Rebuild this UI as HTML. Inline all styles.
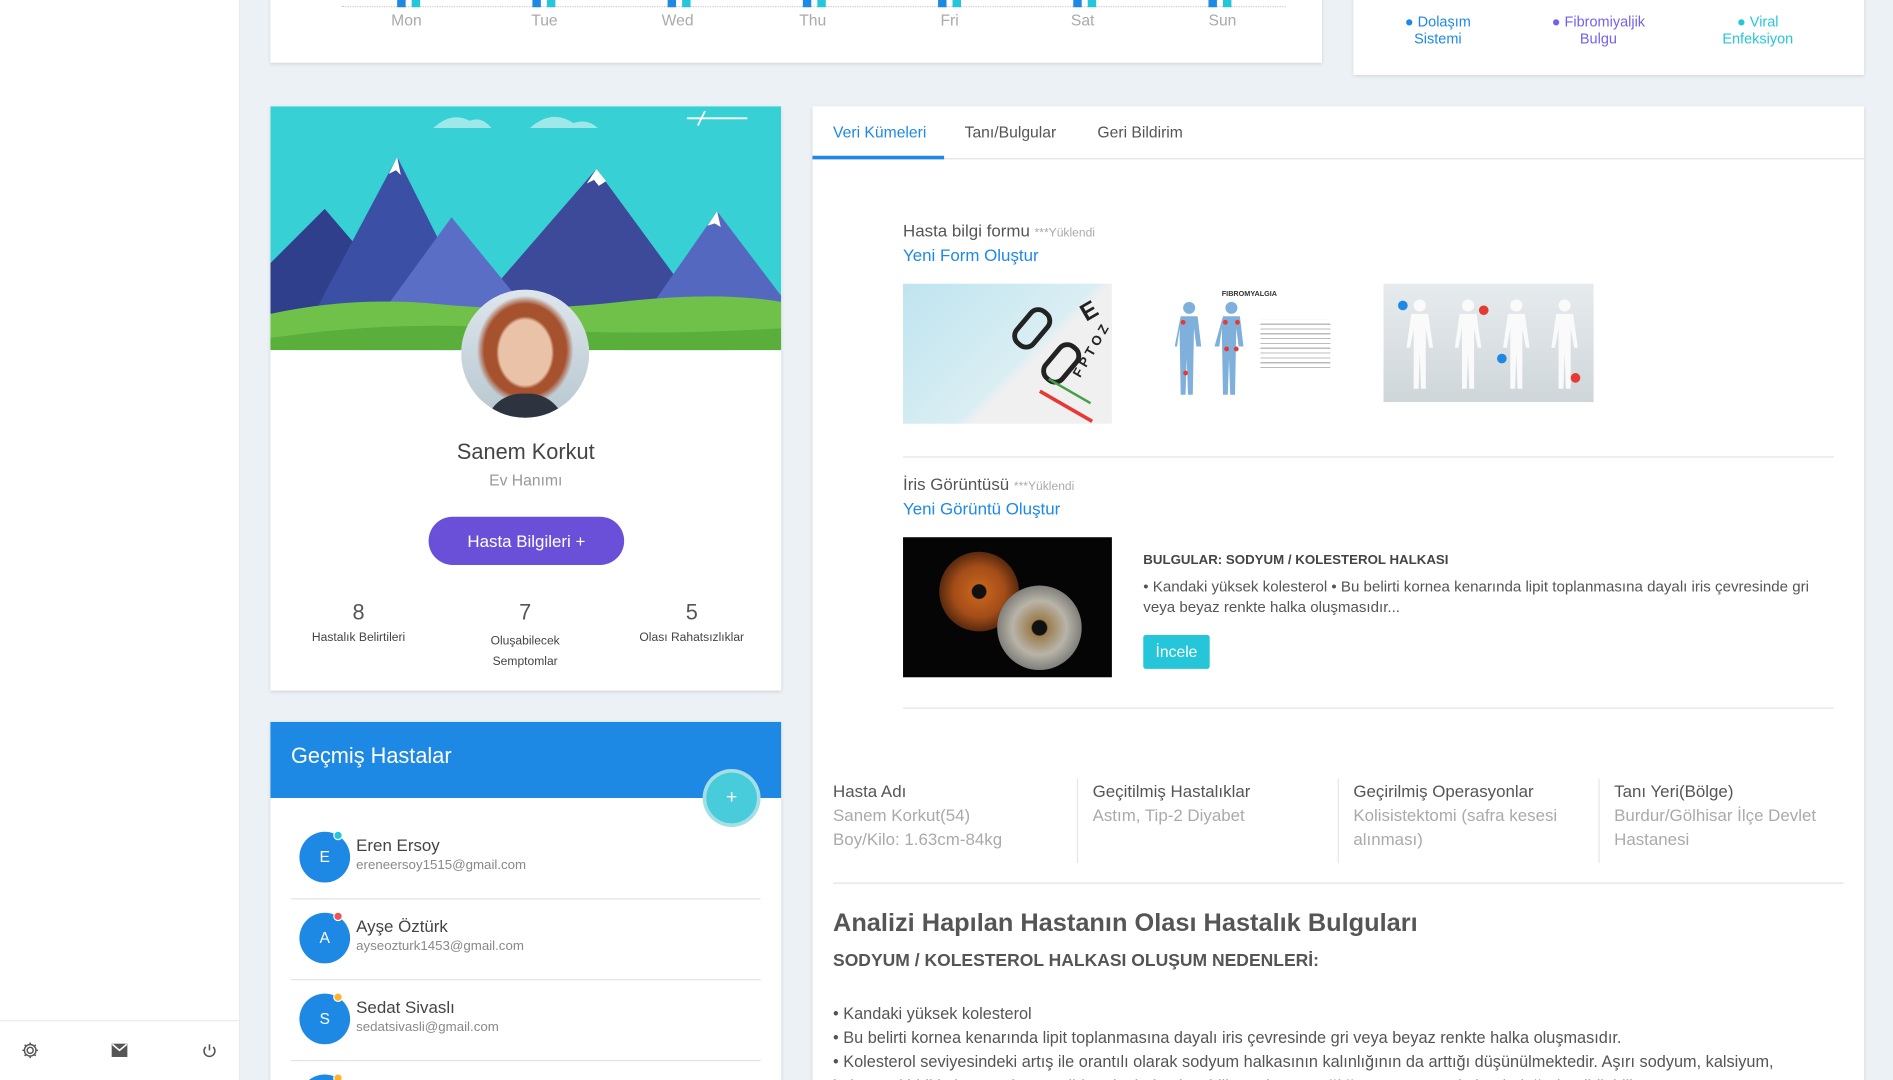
<!DOCTYPE html>
<html><head><meta charset="utf-8"><style>
*{margin:0;padding:0;box-sizing:border-box}
html,body{width:1893px;height:1080px;overflow:hidden;background:#ebf1f4}
#clip{position:relative;width:1893px;height:1080px;overflow:hidden}
#w{position:absolute;left:0;top:0;width:1568px;height:895px;transform:scale(1.20727);transform-origin:0 0;font-family:"Liberation Sans",sans-serif;color:#555}
.a{position:absolute}
.card{position:absolute;background:#fff;box-shadow:0 1px 3px rgba(0,0,0,.12)}
.t{position:absolute;white-space:nowrap}
.gray{color:#a9a9a9}
.blue{color:#1e88e5}
hr{position:absolute;border:0;border-top:1px solid #e3e3e3;height:0}
</style></head><body><div id="clip"><div id="w">
<div class="a" style="left:0;top:0;width:199px;height:895px;background:#fff;border-right:1px solid #e6ebee"></div>
<div class="a" style="left:0;top:845px;width:199px;height:50px;border-top:1px solid #e6ebee"></div>
<svg class="a" style="left:17px;top:862px" width="16" height="16" viewBox="0 0 16 16" fill="none" stroke="#555" stroke-width="1.2"><circle cx="8" cy="8" r="2.5"/><path d="M8 1.5v2M8 12.5v2M1.5 8h2M12.5 8h2M3.4 3.4l1.4 1.4M11.2 11.2l1.4 1.4M3.4 12.6l1.4-1.4M11.2 4.8l1.4-1.4"/><circle cx="8" cy="8" r="4.8"/></svg>
<svg class="a" style="left:92px;top:864px" width="14" height="12" viewBox="0 0 14 12"><rect x="0.5" y="0.5" width="13" height="11" fill="#555"/><path d="M1 1l6 5 6-5" stroke="#fff" stroke-width="1.3" fill="none"/></svg>
<svg class="a" style="left:167px;top:864px" width="13" height="13" viewBox="0 0 13 13" fill="none" stroke="#555" stroke-width="1.3"><path d="M6.5 1v5"/><path d="M3.5 3.2a4.5 4.5 0 1 0 6 0"/></svg>

<div class="card" style="left:224px;top:-10px;width:871px;height:62px"></div>
<div class="t gray" style="left:266px;top:-8px;font-size:10px">0</div>
<div class="a" style="left:283px;top:5px;width:782px;border-top:1px dotted #ccc"></div>
<div class="t" style="left:324px;top:9px;font-size:13px;color:#aaa;width:1000px">
<span class="a" style="left:0">Mon</span><span class="a" style="left:116px">Tue</span><span class="a" style="left:224px">Wed</span><span class="a" style="left:338px">Thu</span><span class="a" style="left:455px">Fri</span><span class="a" style="left:563px">Sat</span><span class="a" style="left:677px">Sun</span></div>
<div class="a" style="left:329px;top:0;width:7px;height:6px;background:#1e88e5"></div><div class="a" style="left:341px;top:0;width:7px;height:6px;background:#26c6da"></div>
<div class="a" style="left:441px;top:0;width:7px;height:6px;background:#1e88e5"></div><div class="a" style="left:453px;top:0;width:7px;height:6px;background:#26c6da"></div>
<div class="a" style="left:553px;top:0;width:7px;height:6px;background:#1e88e5"></div><div class="a" style="left:565px;top:0;width:7px;height:6px;background:#26c6da"></div>
<div class="a" style="left:665px;top:0;width:7px;height:6px;background:#1e88e5"></div><div class="a" style="left:677px;top:0;width:7px;height:6px;background:#26c6da"></div>
<div class="a" style="left:777px;top:0;width:7px;height:6px;background:#1e88e5"></div><div class="a" style="left:789px;top:0;width:7px;height:6px;background:#26c6da"></div>
<div class="a" style="left:889px;top:0;width:7px;height:6px;background:#1e88e5"></div><div class="a" style="left:901px;top:0;width:7px;height:6px;background:#26c6da"></div>
<div class="a" style="left:1001px;top:0;width:7px;height:6px;background:#1e88e5"></div><div class="a" style="left:1013px;top:0;width:7px;height:6px;background:#26c6da"></div>

<div class="card" style="left:1121px;top:-10px;width:423px;height:72px"></div>
<div class="t" style="left:1150px;top:11px;width:82px;text-align:center;font-size:12px;line-height:14px;color:#1e88e5">● Dolaşım<br>Sistemi</div>
<div class="t" style="left:1274px;top:11px;width:100px;text-align:center;font-size:12px;line-height:14px;color:#7460ee">● Fibromiyaljik<br>Bulgu</div>
<div class="t" style="left:1415px;top:11px;width:82px;text-align:center;font-size:12px;line-height:14px;color:#26c6da">● Viral<br>Enfeksiyon</div>

<div class="card" style="left:224px;top:88px;width:423px;height:484px"></div>
<svg class="a" style="left:224px;top:88px" width="423" height="202" viewBox="0 0 423 202">
<rect width="423" height="202" fill="#37d0d4"/>
<path d="M135 18q15-14 30-6q10-4 18 6z" fill="#9ee8ea"/><path d="M215 18q18-16 36-4q12-4 20 4z" fill="#9ee8ea"/>
<path d="M345 10h50M360 4l-6 12" stroke="#fff" stroke-width="1.5"/>
<path d="M0 200V130l45-45 60 70z" fill="#2f3f8c"/>
<path d="M20 202l85-160 80 160z" fill="#3b4fa5"/>
<path d="M140 202l130-150 110 150z" fill="#3d4a9a"/>
<path d="M240 202l-90-110-80 110z" fill="#5b6ec5"/>
<path d="M290 202l80-115 53 70v45z" fill="#5568c0"/>
<path d="M270 52l-8 12 6-3 4 5 6-4z" fill="#fff"/>
<path d="M105 42l-7 14 6-3 4 4z" fill="#fff"/>
<path d="M370 87l-8 12 6-2 5 3z" fill="#fff"/>
<path d="M0 172q70-15 140-8t150-2 133 0v40H0z" fill="#6fc14a"/>
<path d="M0 192q100-15 200-8t223 0v18H0z" fill="#5aae3c"/>
</svg>
<div class="a" style="left:382px;top:240px;width:106px;height:106px;border-radius:50%;background:#fff;overflow:hidden">
<div class="a" style="left:0;top:0;width:106px;height:106px;background:radial-gradient(ellipse 24px 30px at 53px 52px,#e9c2a8 90%,transparent 100%),radial-gradient(ellipse 40px 45px at 53px 50px,#a7522e 85%,transparent 100%),linear-gradient(#dde6ec,#b8c7d0)"></div>
<div class="a" style="left:20px;top:86px;width:66px;height:30px;border-radius:30px 30px 0 0;background:#2d3440"></div>
</div>
<div class="t" style="left:224px;top:364px;width:423px;text-align:center;font-size:18px;color:#444">Sanem Korkut</div>
<div class="t" style="left:224px;top:390px;width:423px;text-align:center;font-size:13px;color:#999">Ev Hanımı</div>
<div class="a" style="left:355px;top:428px;width:162px;height:40px;border-radius:20px;background:#6a4fd8;color:#fff;font-size:14px;text-align:center;line-height:40px">Hasta Bilgileri +</div>
<div class="t" style="left:247px;top:497px;width:100px;text-align:center;font-size:18px;color:#555">8</div>
<div class="t" style="left:247px;top:523px;width:100px;text-align:center;font-size:10px;color:#444">Hastalık Belirtileri</div>
<div class="t" style="left:385px;top:497px;width:100px;text-align:center;font-size:18px;color:#555">7</div>
<div class="t" style="left:385px;top:523px;width:100px;text-align:center;font-size:10px;color:#444;line-height:17px">Oluşabilecek<br>Semptomlar</div>
<div class="t" style="left:523px;top:497px;width:100px;text-align:center;font-size:18px;color:#555">5</div>
<div class="t" style="left:523px;top:523px;width:100px;text-align:center;font-size:10px;color:#444">Olası Rahatsızlıklar</div>

<div class="card" style="left:224px;top:598px;width:423px;height:320px"></div>
<div class="a" style="left:224px;top:598px;width:423px;height:63px;background:#1e88e5"></div>
<div class="t" style="left:241px;top:616px;font-size:18px;color:#fff">Geçmiş Hastalar</div>
<div class="a" style="left:582px;top:637px;width:48px;height:48px;border-radius:50%;background:#a5dfe6"></div>
<div class="a" style="left:585px;top:640px;width:42px;height:42px;border-radius:50%;background:#48ccdc;color:#fff;font-size:16px;text-align:center;line-height:42px">+</div>
<div class="a" style="left:248px;top:689px;width:42px;height:42px;border-radius:50%;background:#1e88e5;color:#fff;text-align:center;line-height:42px;font-size:13px">E</div>
<div class="a" style="left:276px;top:688px;width:8px;height:8px;border-radius:50%;background:#26c6da;border:1.5px solid #fff"></div>
<div class="t" style="left:295px;top:692px;font-size:14px;color:#444">Eren Ersoy</div>
<div class="t" style="left:295px;top:711px;font-size:11px;color:#888">ereneersoy1515@gmail.com</div>
<hr style="left:241px;top:744px;width:389px">
<div class="a" style="left:248px;top:756px;width:42px;height:42px;border-radius:50%;background:#1e88e5;color:#fff;text-align:center;line-height:42px;font-size:13px">A</div>
<div class="a" style="left:276px;top:755px;width:8px;height:8px;border-radius:50%;background:#ef5350;border:1.5px solid #fff"></div>
<div class="t" style="left:295px;top:759px;font-size:14px;color:#444">Ayşe Öztürk</div>
<div class="t" style="left:295px;top:778px;font-size:11px;color:#888">ayseozturk1453@gmail.com</div>
<hr style="left:241px;top:811px;width:389px">
<div class="a" style="left:248px;top:823px;width:42px;height:42px;border-radius:50%;background:#1e88e5;color:#fff;text-align:center;line-height:42px;font-size:13px">S</div>
<div class="a" style="left:276px;top:822px;width:8px;height:8px;border-radius:50%;background:#ffb22b;border:1.5px solid #fff"></div>
<div class="t" style="left:295px;top:826px;font-size:14px;color:#444">Sedat Sivaslı</div>
<div class="t" style="left:295px;top:845px;font-size:11px;color:#888">sedatsivasli@gmail.com</div>
<hr style="left:241px;top:878px;width:389px">
<div class="a" style="left:248px;top:890px;width:42px;height:42px;border-radius:50%;background:#1e88e5"></div>
<div class="a" style="left:276px;top:889px;width:8px;height:8px;border-radius:50%;background:#ffb22b;border:1.5px solid #fff"></div>

<div class="card" style="left:673px;top:88px;width:871px;height:830px"></div>
<div class="a" style="left:673px;top:131px;width:871px;border-top:1px solid #e3e3e3"></div>
<div class="a" style="left:673px;top:129px;width:109px;height:3px;background:#1e88e5"></div>
<div class="t blue" style="left:690px;top:102px;font-size:13px">Veri Kümeleri</div>
<div class="t" style="left:799px;top:102px;font-size:13px;color:#555">Tanı/Bulgular</div>
<div class="t" style="left:909px;top:102px;font-size:13px;color:#555">Geri Bildirim</div>

<div class="t" style="left:748px;top:183px;font-size:14px;color:#555">Hasta bilgi formu <span style="font-size:10px;color:#aaa">***Yüklendi</span></div>
<div class="t blue" style="left:748px;top:203px;font-size:14px">Yeni Form Oluştur</div>
<div class="a" style="left:748px;top:235px;width:173px;height:116px;background:linear-gradient(135deg,#bfe4ef,#d9eef3 55%,#f0f0f0 60%);overflow:hidden">
<div class="a" style="left:88px;top:26px;width:38px;height:22px;border:4px solid #222;border-radius:10px;transform:rotate(-50deg)"></div>
<div class="a" style="left:112px;top:55px;width:38px;height:22px;border:4px solid #222;border-radius:10px;transform:rotate(-50deg)"></div>
<div class="t" style="left:148px;top:12px;font-size:20px;font-weight:bold;color:#222;transform:rotate(-30deg)">E</div>
<div class="t" style="left:132px;top:50px;font-size:11px;font-weight:bold;color:#222;transform:rotate(-60deg)">F P T O Z</div>
<div class="a" style="left:110px;top:100px;width:50px;height:3px;background:#e53935;transform:rotate(30deg)"></div>
<div class="a" style="left:118px;top:88px;width:40px;height:2px;background:#43a047;transform:rotate(30deg)"></div>
</div>
<div class="a" style="left:948px;top:235px;width:172px;height:116px;background:#fff">
<div class="t" style="left:64px;top:6px;font-size:6px;font-weight:bold;color:#333">FIBROMYALGIA</div>
<svg class="a" style="left:22px;top:14px" width="70" height="80" viewBox="0 0 70 80" fill="#7fb0dc"><circle cx="15" cy="6" r="5"/><path d="M8 13h14l3 25h-4l-2-15-1 55h-4l-1-30-1 30h-4l-1-55-2 15H3z"/><circle cx="50" cy="6" r="5"/><path d="M43 13h14l3 25h-4l-2-15-1 55h-4l-1-30-1 30h-4l-1-55-2 15h-4z"/><g fill="#e53935"><circle cx="10" cy="18" r="2"/><circle cx="45" cy="18" r="2"/><circle cx="55" cy="18" r="2"/><circle cx="46" cy="40" r="2"/><circle cx="54" cy="40" r="2"/><circle cx="12" cy="60" r="2"/></g></svg>
<div class="a" style="left:96px;top:30px;width:58px;height:40px;background:repeating-linear-gradient(#fff 0 3px,#bbb 3px 4px)"></div>
</div>
<div class="a" style="left:1146px;top:235px;width:174px;height:98px;background:linear-gradient(#e6ebee,#cfd6da)">
<svg class="a" style="left:8px;top:10px" width="158" height="82" viewBox="0 0 158 82" fill="#fafafa"><g><circle cx="22" cy="8" r="5"/><path d="M15 15h14l4 28h-3l-3-16v50h-4l-1-30-1 30h-4V27l-3 16h-3z"/></g><g transform="translate(40)"><circle cx="22" cy="8" r="5"/><path d="M15 15h14l4 28h-3l-3-16v50h-4l-1-30-1 30h-4V27l-3 16h-3z"/></g><g transform="translate(80)"><circle cx="22" cy="8" r="5"/><path d="M15 15h14l4 28h-3l-3-16v50h-4l-1-30-1 30h-4V27l-3 16h-3z"/></g><g transform="translate(120)"><circle cx="22" cy="8" r="5"/><path d="M15 15h14l4 28h-3l-3-16v50h-4l-1-30-1 30h-4V27l-3 16h-3z"/></g><circle cx="8" cy="8" r="4" fill="#1e88e5"/><circle cx="75" cy="12" r="4" fill="#e53935"/><circle cx="90" cy="52" r="4" fill="#1e88e5"/><circle cx="151" cy="68" r="4" fill="#e53935"/></svg>
</div>
<hr style="left:748px;top:378px;width:771px">

<div class="t" style="left:748px;top:393px;font-size:14px;color:#555">İris Görüntüsü <span style="font-size:10px;color:#aaa">***Yüklendi</span></div>
<div class="t blue" style="left:748px;top:413px;font-size:14px">Yeni Görüntü Oluştur</div>
<div class="a" style="left:748px;top:445px;width:173px;height:116px;background:#050505;overflow:hidden">
<div class="a" style="left:30px;top:12px;width:66px;height:66px;border-radius:50%;background:radial-gradient(circle,#111 0 12%,#c0601c 14%,#a44d18 45%,#5a2a0f 70%)"></div>
<div class="a" style="left:78px;top:40px;width:70px;height:70px;border-radius:50%;background:radial-gradient(circle,#111 0 12%,#9c7d50 14%,#b8b4a8 45%,#7d7c78 72%)"></div>
</div>
<div class="t" style="left:947px;top:458px;font-size:11px;font-weight:bold;color:#444">BULGULAR: SODYUM / KOLESTEROL HALKASI</div>
<div class="a" style="left:947px;top:478px;width:570px;font-size:12.5px;line-height:17px;color:#555">• Kandaki yüksek kolesterol • Bu belirti kornea kenarında lipit toplanmasına dayalı iris çevresinde gri veya beyaz renkte halka oluşmasıdır...</div>
<div class="a" style="left:947px;top:526px;width:55px;height:28px;background:#26c6da;color:#fff;font-size:13px;text-align:center;line-height:28px;border-radius:2px">İncele</div>
<hr style="left:748px;top:586px;width:771px">

<div class="a" style="left:892px;top:645px;height:70px;border-left:1px solid #e6e6e6"></div>
<div class="a" style="left:1108px;top:645px;height:70px;border-left:1px solid #e6e6e6"></div>
<div class="a" style="left:1324px;top:645px;height:70px;border-left:1px solid #e6e6e6"></div>
<div class="a" style="left:690px;top:645px;font-size:14px;line-height:20px;color:#aaa"><span style="color:#555">Hasta Adı</span><br>Sanem Korkut(54)<br>Boy/Kilo: 1.63cm-84kg</div>
<div class="a" style="left:905px;top:645px;font-size:14px;line-height:20px;color:#aaa"><span style="color:#555">Geçitilmiş Hastalıklar</span><br>Astım, Tip-2 Diyabet</div>
<div class="a" style="left:1121px;top:645px;width:185px;font-size:14px;line-height:20px;color:#aaa"><span style="color:#555">Geçirilmiş Operasyonlar</span><br>Kolisistektomi (safra kesesi alınması)</div>
<div class="a" style="left:1337px;top:645px;width:185px;font-size:14px;line-height:20px;color:#aaa"><span style="color:#555">Tanı Yeri(Bölge)</span><br>Burdur/Gölhisar İlçe Devlet Hastanesi</div>
<hr style="left:690px;top:731px;width:837px">
<div class="t" style="left:690px;top:753px;font-size:21px;font-weight:bold;color:#555">Analizi Hapılan Hastanın Olası Hastalık Bulguları</div>
<div class="t" style="left:690px;top:788px;font-size:14.5px;font-weight:bold;color:#555">SODYUM / KOLESTEROL HALKASI OLUŞUM NEDENLERİ:</div>
<div class="a" style="left:690px;top:830px;width:840px;font-size:13.5px;line-height:20px;color:#555;white-space:nowrap;overflow:hidden">• Kandaki yüksek kolesterol<br>• Bu belirti kornea kenarında lipit toplanmasına dayalı iris çevresinde gri veya beyaz renkte halka oluşmasıdır.<br>• Kolesterol seviyesindeki artış ile orantılı olarak sodyum halkasının kalınlığının da arttığı düşünülmektedir. Aşırı sodyum, kalsiyum,<br>kolesterol birikimi ve sertleşme gibi nedenlerle oluşabilir ve damar sağlığının göstergesi olarak değerlendirilebilir.</div>
</div></div></body></html>
